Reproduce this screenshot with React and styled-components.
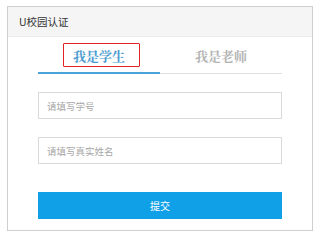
import React, { useState } from 'react'
import styled, { createGlobalStyle } from 'styled-components'

const GlobalStyle = createGlobalStyle`
    body {
        margin: 0;
        background: #fff;
        font-family: "Noto Sans CJK SC", "Noto Sans", sans-serif;
    }
`;

const StyledCard = styled.div`
    box-sizing: border-box;
    width: 306px;
    height: 225px;
    margin: 6px 7px;
    border: 1px solid #cfcfcf;
    background: #fff;
`;

const StyledHeader = styled.div`
    height: 29px;
    padding-left: 11px;
    display: flex;
    align-items: center;
    background: #f5f5f5;
    border-bottom: 1px solid #ececec;
    font-size: 10.5px;
    color: #333;
`;

const StyledBody = styled.div`
    padding: 6px 30px 0 30px;
`;

const StyledTabs = styled.div`
    display: flex;
    border-bottom: 1px solid #e0e0e0;
`;

const StyledTab = styled.div`
    flex: 1;
    display: flex;
    justify-content: center;
    padding-bottom: 5px;
    margin-bottom: -1px;
    border-bottom: 2px solid ${p => p.active ? '#4aa3d8' : 'transparent'};
    cursor: pointer;
`;

const StyledTabLabel = styled.span`
    box-sizing: border-box;
    height: 24px;
    padding: ${p => p.marked ? '0 14px 0 9px' : '0 12px'};
    margin-left: ${p => p.marked ? '5px' : '0'};
    display: flex;
    align-items: center;
    font-family: "Liberation Serif", "Noto Serif CJK SC", serif;
    font-size: 13px;
    font-weight: 700;
    color: ${p => p.active ? '#4a9bd0' : '#b4b4b4'};
    border: 1.5px solid ${p => p.marked ? '#e02424' : 'transparent'};
    border-radius: 1px;
`;

const StyledForm = styled.form`
    display: flex;
    flex-direction: column;
    padding-top: 18px;
`;

const StyledInput = styled.input`
    box-sizing: border-box;
    width: 100%;
    height: 27px;
    margin-bottom: ${p => p.last ? '28px' : '18px'};
    padding: 0 8px;
    border: 1px solid #dadada;
    outline: none;
    font-family: inherit;
    font-size: 9.5px;
    color: #333;
    &::placeholder {
        color: #a8a8a8;
    }
`;

const StyledButton = styled.button`
    width: 100%;
    height: 27px;
    border: none;
    background: #0fa0e8;
    color: #fff;
    font-family: inherit;
    font-size: 10px;
    cursor: pointer;
`;

export default function App(){
    const [tab, setTab] = useState('student');

    return (
        <>
            <GlobalStyle />
            <StyledCard>
                <StyledHeader>U校园认证</StyledHeader>
                <StyledBody>
                    <StyledTabs>
                        <StyledTab active={tab === 'student'} onClick={() => setTab('student')}>
                            <StyledTabLabel active={tab === 'student'} marked>我是学生</StyledTabLabel>
                        </StyledTab>
                        <StyledTab active={tab === 'teacher'} onClick={() => setTab('teacher')}>
                            <StyledTabLabel active={tab === 'teacher'}>我是老师</StyledTabLabel>
                        </StyledTab>
                    </StyledTabs>
                    <StyledForm onSubmit={e => e.preventDefault()}>
                        <StyledInput placeholder={tab === 'student' ? '请填写学号' : '请填写工号'} />
                        <StyledInput placeholder="请填写真实姓名" last />
                        <StyledButton type="submit">提交</StyledButton>
                    </StyledForm>
                </StyledBody>
            </StyledCard>
        </>
    )
}
